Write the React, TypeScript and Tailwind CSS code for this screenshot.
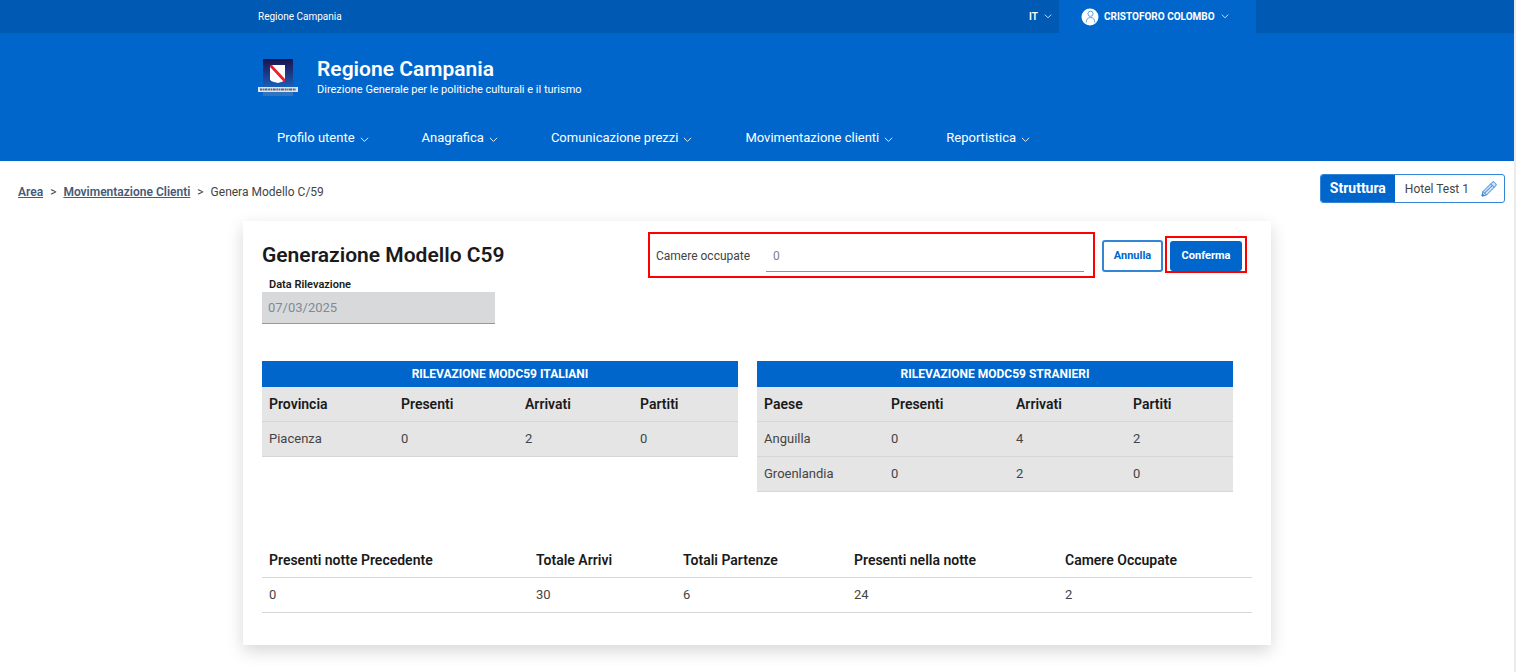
import clsx from "clsx";

type Column = { label: string; width: string };

const navItems = [
  "Profilo utente",
  "Anagrafica",
  "Comunicazione prezzi",
  "Movimentazione clienti",
  "Reportistica",
];

const italiani = {
  title: "RILEVAZIONE MODC59 ITALIANI",
  columns: [
    { label: "Provincia", width: "w-[132px]" },
    { label: "Presenti", width: "w-[124px]" },
    { label: "Arrivati", width: "w-[115px]" },
    { label: "Partiti", width: "w-auto" },
  ],
  rows: [["Piacenza", "0", "2", "0"]],
};

const stranieri = {
  title: "RILEVAZIONE MODC59 STRANIERI",
  columns: [
    { label: "Paese", width: "w-[127px]" },
    { label: "Presenti", width: "w-[125px]" },
    { label: "Arrivati", width: "w-[117px]" },
    { label: "Partiti", width: "w-auto" },
  ],
  rows: [
    ["Anguilla", "0", "4", "2"],
    ["Groenlandia", "0", "2", "0"],
  ],
};

const totali = {
  columns: [
    { label: "Presenti notte Precedente", width: "w-[267px]" },
    { label: "Totale Arrivi", width: "w-[147px]" },
    { label: "Totali Partenze", width: "w-[171px]" },
    { label: "Presenti nella notte", width: "w-[211px]" },
    { label: "Camere Occupate", width: "w-auto" },
  ],
  rows: [["0", "30", "6", "24", "2"]],
};

function Chevron({ className }: { className?: string }) {
  return (
    <svg viewBox="0 0 10 10" className={clsx("shrink-0", className)} fill="none" stroke="currentColor" aria-hidden="true">
      <path d="M1 2l4 4 4-4" />
    </svg>
  );
}

function Logo() {
  return (
    <svg viewBox="0 0 40 38" className="h-[38px] w-10 shrink-0" role="img" aria-label="Regione Campania">
      <defs>
        <linearGradient id="shieldSky" x1="0" y1="0" x2="0" y2="1">
          <stop offset="0" stopColor="#16164f" />
          <stop offset="0.35" stopColor="#1c2c74" />
          <stop offset="1" stopColor="#1b62bd" />
        </linearGradient>
      </defs>
      <rect x="5" y="0" width="30" height="29" fill="url(#shieldSky)" />
      <rect x="5" y="33" width="30" height="4" fill="#2f74bf" />
      <path d="M12 6h15v14c0 2-3 3-7 4-5-1-8-2-8-4z" fill="#fff" />
      <path d="M12 6h2l13 14v2l-1 1L12 8z" fill="#e3202c" />
      <rect x="0" y="28" width="40" height="5" fill="#dfe5ef" />
      <path d="M2 30.500h36" stroke="#5c6076" strokeWidth="2" strokeDasharray="2 .6 1.300 .6 3 .7" />
    </svg>
  );
}

function Avatar() {
  return (
    <svg viewBox="0 0 18 18" className="h-[18px] w-[18px] shrink-0" aria-hidden="true">
      <circle cx="9" cy="9" r="8.500" fill="#fff" />
      <g fill="none" stroke="#5c9de0" strokeWidth="1">
        <circle cx="9.500" cy="5.800" r="2.600" />
        <path d="M5.200 14.500c0-3 1.500-5 4.300-5s4.300 2 4.300 5" />
      </g>
    </svg>
  );
}

function Pencil() {
  return (
    <svg viewBox="0 0 16 16" className="h-4 w-4" fill="none" stroke="#3385d6" aria-hidden="true">
      <path d="M1 15l1-4.500L11.200 1.300a1.600 1.600 0 0 1 2.200 0l1.300 1.300a1.600 1.600 0 0 1 0 2.200L5.500 14z" fill="#cfe1f5" />
      <path d="M2 10.500L5.500 14M9.600 2.900l3.500 3.500M3.600 12L11.300 4.500" />
      <path d="M1 15l.4-2 1.600 1.600z" fill="#0066cc" />
    </svg>
  );
}

function HeadRow({ columns }: { columns: Column[] }) {
  return (
    <tr className="h-[34px] border-b border-[#d6d6d6]">
      {columns.map((col) => (
        <th
          key={col.label}
          scope="col"
          className={clsx("px-[7px] text-left text-[14px] leading-5 font-semibold text-[#1a1a1a]", col.width)}
        >
          {col.label}
        </th>
      ))}
    </tr>
  );
}

function BodyRows({ rows }: { rows: string[][] }) {
  return (
    <tbody>
      {rows.map((row) => (
        <tr key={row[0]} className="h-[35px] border-b border-[#d6d6d6]">
          {row.map((cell, i) => (
            <td key={i} className="px-[7px]">
              {cell}
            </td>
          ))}
        </tr>
      ))}
    </tbody>
  );
}

function RilevazioneTable({ title, columns, rows }: { title: string; columns: Column[]; rows: string[][] }) {
  return (
    <div>
      <h2 className="bg-[#0066cc] text-center text-[12px] leading-[26px] font-bold text-white">{title}</h2>
      <table aria-label={title} className="w-full table-fixed bg-[#e5e5e5] text-[13px] text-[#444]">
        <thead>
          <HeadRow columns={columns} />
        </thead>
        <BodyRows rows={rows} />
      </table>
    </div>
  );
}

function Header() {
  return (
    <header className="bg-[#0066cc] text-white">
      <div className="bg-[#0059b3]">
        <div className="mx-auto flex h-[33px] max-w-[998px] items-center">
          <a href="#" className="mr-auto text-[10px]">
            Regione Campania
          </a>
          <button type="button" className="flex h-full items-center gap-[6px] px-[7px] text-[10px] font-semibold">
            IT
            <Chevron className="h-2 w-2" />
          </button>
          <button
            type="button"
            className="flex h-full w-[197px] items-center gap-[5px] bg-[#0066cc] px-[22px] text-[10px] font-bold whitespace-nowrap"
          >
            <Avatar />
            CRISTOFORO COLOMBO
            <Chevron className="ml-px h-2 w-2" />
          </button>
        </div>
      </div>

      <div className="mx-auto flex max-w-[998px] items-center gap-[19px] pt-6">
        <Logo />
        <div>
          <p className="text-[21px] leading-6 font-semibold">Regione Campania</p>
          <p className="text-[11px] leading-[18px]">Direzione Generale per le politiche culturali e il turismo</p>
        </div>
      </div>

      <nav className="mx-auto flex max-w-[998px] gap-[53px] px-[19px] pt-[22px] pb-[6px]">
        {navItems.map((item) => (
          <button key={item} type="button" className="flex items-center gap-[5px] text-[13px] leading-[34px]">
            {item}
            <Chevron className="mt-1 h-[9px] w-[9px]" />
          </button>
        ))}
      </nav>
    </header>
  );
}

export default function App() {
  return (
    <div className="min-h-screen border-r-2 border-[#ececec] bg-white font-[Roboto,sans-serif] text-[#444]">
      <Header />

      <div className="flex items-center justify-between pt-[13px] pr-[9px] pl-[18px]">
        <nav aria-label="Percorso" className="flex gap-[7px] pt-[6px] text-[12px]">
          <a href="#" className="font-semibold text-[#455a75] underline">
            Area
          </a>
          <span>&gt;</span>
          <a href="#" className="font-semibold text-[#455a75] underline">
            Movimentazione Clienti
          </a>
          <span>&gt;</span>
          <span>Genera Modello C/59</span>
        </nav>

        <div className="flex h-[29px] items-stretch overflow-hidden rounded-[3px] border border-[#3385d6]">
          <span className="flex items-center bg-[#0066cc] px-[9px] text-[14px] font-bold text-white">Struttura</span>
          <span className="flex items-center pr-3 pl-[10px] text-[12px]">Hotel Test 1</span>
          <button type="button" aria-label="Modifica struttura" className="pr-[7px]">
            <Pencil />
          </button>
        </div>
      </div>

      <main className="mx-auto mt-[18px] max-w-[1028px] px-[19px] pt-[11px] pb-8 shadow-[0_6px_16px_rgba(0,0,0,0.16)]">
        <div className="flex items-start">
          <h1 className="mr-auto text-[21px] leading-[46px] font-semibold text-[#1a1a1a]">Generazione Modello C59</h1>

          <div className="flex h-[46px] w-[447px] items-end border-2 border-[#f00] pr-[9px] pb-1 pl-[6px]">
            <label htmlFor="camere" className="w-[110px] text-[12px] leading-8">
              Camere occupate
            </label>
            <input
              id="camere"
              type="text"
              placeholder="0"
              className="h-8 min-w-0 flex-1 border-b border-[#8496a6] px-[7px] text-[12px] outline-none placeholder:text-[#808080]"
            />
          </div>

          <button
            type="button"
            className="mt-2 ml-[7px] h-8 w-[61px] rounded-[3px] border-2 border-[#3385d6] text-[11px] font-bold text-[#0066cc]"
          >
            Annulla
          </button>
          <div className="mt-1 mr-[5px] ml-[2px] border-2 border-[#f00] px-[3px] pt-[3px]">
            <button type="button" className="block h-[30px] w-[72px] rounded-[3px] bg-[#0066cc] text-[11px] font-bold text-white">
              Conferma
            </button>
          </div>
        </div>

        <div className="w-[233px]">
          <label htmlFor="data" className="block px-[7px] text-[11px] leading-[14px] font-semibold text-[#1a1a1a]">
            Data Rilevazione
          </label>
          <input
            id="data"
            type="text"
            value="07/03/2025"
            disabled
            className="h-8 w-full border-b border-[#8a9aa8] bg-[#d8d9da] px-[6px] text-[13px] text-[#808a94]"
          />
        </div>

        <div className="mt-[37px] grid grid-cols-2 items-start gap-[19px] pr-[19px]">
          <RilevazioneTable {...italiani} />
          <RilevazioneTable {...stranieri} />
        </div>

        <table aria-label="Totali" className="mt-[52px] w-full table-fixed text-[13px]">
          <thead>
            <HeadRow columns={totali.columns} />
          </thead>
          <BodyRows rows={totali.rows} />
        </table>
      </main>
    </div>
  );
}
